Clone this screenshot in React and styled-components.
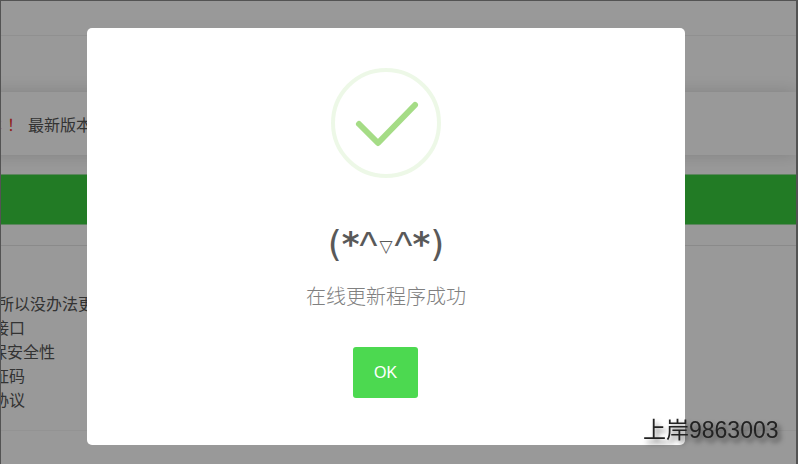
import React from 'react';
import styled, { createGlobalStyle } from 'styled-components';

const GlobalStyle = createGlobalStyle`
  html, body {
    margin: 0;
    padding: 0;
    background: #fff;
    overflow: hidden;
  }
  body {
    font-family: "Liberation Sans", "Noto Sans CJK SC", sans-serif;
  }
`;

const Page = styled.div`
  width: 798px;
  height: 464px;
  box-sizing: border-box;
  border-top: 1px solid #8a8a8a;
  border-left: 1px solid #8a8a8a;
  border-right: 2px solid #8a8a8a;
  overflow: hidden;
  background: #fff;
`;

const TopBar = styled.div`
  height: 34px;
  border-bottom: 1px solid #f0f0f0;
`;

const Gap = styled.div`
  height: 56px;
`;

const Notice = styled.div`
  height: 63px;
  display: flex;
  align-items: center;
  margin-left: -15px;
  font-size: 16px;
  color: #555;
  box-shadow: 0 0 16px rgba(0, 0, 0, 0.16);
`;

const Warn = styled.span`
  color: #e33;
  letter-spacing: 5px;
`;

const GreenBar = styled.div`
  height: 49px;
  margin-top: 20px;
  background: #3acd3f;
  box-shadow: 0 0 0 1px #9be09e;
`;

const Details = styled.div`
  margin-top: 21px;
  border-top: 1px solid #e6e6e6;
  height: 186px;
  padding-top: 47px;
  box-sizing: border-box;
  border-bottom: 1px solid #f6f6f6;
`;

const DetailLine = styled.div`
  font-size: 16px;
  line-height: 24px;
  color: #555;
  white-space: nowrap;
  margin-left: ${(props) => props.$indent}px;
`;

const Overlay = styled.div`
  position: fixed;
  inset: 0;
  background: rgba(0, 0, 0, 0.4);
`;

const Modal = styled.div`
  position: absolute;
  left: 87px;
  top: 28px;
  width: 598px;
  height: 417px;
  box-sizing: border-box;
  padding-top: 40px;
  background: #fff;
  border-radius: 5px;
  display: flex;
  flex-direction: column;
  align-items: center;
  text-align: center;
`;

const SuccessIcon = styled.svg`
  display: block;
  width: 110px;
  height: 110px;
`;

const Title = styled.h2`
  margin: 45px 0 0;
  height: 42px;
  display: flex;
  align-items: center;
  font-family: "DejaVu Sans", sans-serif;
  font-size: 36px;
  line-height: 42px;
  font-weight: 400;
  color: #595959;
`;

const Star = styled.span`
  font-size: 34px;
  font-weight: 700;
`;

const Caret = styled.span`
  font-family: "Liberation Sans", sans-serif;
  font-size: 38px;
  margin-top: 4px;
`;

const Triangle = styled.span`
  font-size: 17px;
  margin: 4px 2px 0;
`;

const Message = styled.div`
  margin-top: 20px;
  font-size: 20px;
  line-height: 24px;
  font-weight: 300;
  color: #808080;
`;

const OkButton = styled.button`
  margin: 38px 1px 0 0;
  width: 65px;
  height: 51px;
  padding: 0;
  border: 0;
  border-radius: 3px;
  background: #4cd950;
  color: #fff;
  font: inherit;
  font-size: 16px;
`;

const Watermark = styled.div`
  position: fixed;
  left: 643px;
  top: 415px;
  font-size: 23px;
  line-height: 30px;
  color: #222;
  white-space: nowrap;
  text-shadow: 3px 4px 5px rgba(0, 0, 0, 0.55);
`;

const details = [
  { text: '所以没办法更新', indent: -3 },
  { text: '接口', indent: -8 },
  { text: '保安全性', indent: -10 },
  { text: '证码', indent: -8 },
  { text: '协议', indent: -8 },
];

export default function App() {
  return (
    <>
      <GlobalStyle />
      <Page>
        <TopBar />
        <Gap />
        <Notice>
          <Warn>本！</Warn>
          <span>最新版本</span>
        </Notice>
        <GreenBar />
        <Details>
          {details.map((line) => (
            <DetailLine key={line.text} $indent={line.indent}>{line.text}</DetailLine>
          ))}
        </Details>
      </Page>
      <Overlay>
        <Modal>
          <SuccessIcon viewBox="0 0 110 110">
            <circle cx="55" cy="55" r="53" fill="none" stroke="#a5dc86" strokeOpacity="0.2" strokeWidth="4" />
            <path d="M28 56 L47 75 L84 37" fill="none" stroke="#a5dc86" strokeWidth="6" strokeLinecap="round" strokeLinejoin="round" />
          </SuccessIcon>
          <Title>(<Star>*</Star><Caret>^</Caret><Triangle>▽</Triangle><Caret>^</Caret><Star>*</Star>)</Title>
          <Message>在线更新程序成功</Message>
          <OkButton>OK</OkButton>
        </Modal>
      </Overlay>
      <Watermark>上岸9863003</Watermark>
    </>
  );
}
